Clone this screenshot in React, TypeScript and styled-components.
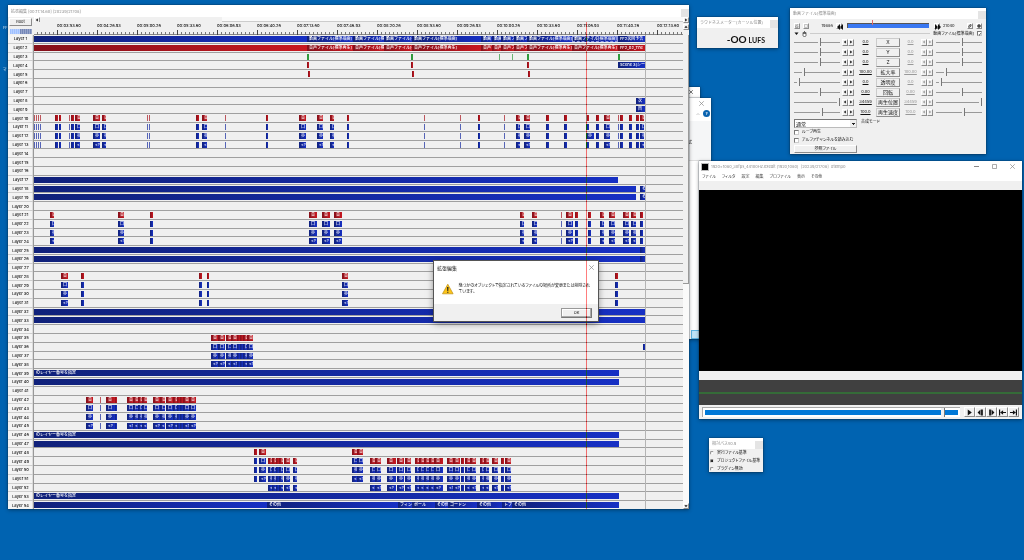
import React from "react";
import styled, { createGlobalStyle, css } from "styled-components";

const GlobalStyle = createGlobalStyle`
  * { box-sizing: border-box; }
  body {
    margin: 0;
    background: #0063b1;
    font-family: Inter, "Noto Sans CJK JP", sans-serif;
    font-size: 4px;
    line-height: 6px;
    color: #111;
    font-feature-settings: "palt";
  }
  button, input, select {
    margin: 0;
    padding: 0;
    font: inherit;
    color: inherit;
    font-feature-settings: inherit;
    border-radius: 0;
  }
`;

/* ---------- shared parts ---------- */

const raised = css`
  background: #f0f0f0;
  border: 1px solid;
  border-color: #fff #8c8c8c #8c8c8c #fff;
`;

const Desktop = styled.main`
  position: relative;
  min-height: 100vh;
  overflow: hidden;
  background: #0063b1;
`;

const DesktopLabel = styled.span`
  position: absolute;
  left: 3px;
  color: #cfe2f2;
`;

const Window = styled.section`
  position: absolute;
  display: flex;
  flex-direction: column;
  background: #f0f0f0;
  box-shadow: 0 0 1px #123, 0 1px 4px rgba(0, 0, 0, 0.4);
`;

const TitleBar = styled.header<{ $active?: boolean }>`
  display: flex;
  align-items: center;
  flex: none;
  height: ${(p) => (p.$active ? 13 : 11)}px;
  padding-left: 3px;
  background: #fff;
  color: ${(p) => (p.$active ? "#111" : "#8c8c8c")};
  white-space: nowrap;
`;

const TitleText = styled.h1`
  flex: 1;
  margin: 0;
  font-size: inherit;
  font-weight: 400;
  font-feature-settings: normal;
`;

const CloseStub = styled.button`
  width: 8px;
  height: 8px;
  margin-top: 2px;
  border: 0;
  background: #e4e4e4;
  color: #fff;
  line-height: 6px;
`;

const PlainIconButton = styled.button`
  display: grid;
  place-items: center;
  border: 0;
  background: none;
  color: #888;
`;

const Cross = ({ size = 5 }: { size?: number }) => (
  <svg width={size} height={size} viewBox="0 0 10 10" aria-hidden="true">
    <path d="M0.5 0.5L9.5 9.5M9.5 0.5L0.5 9.5" stroke="currentColor" strokeWidth="1.4" />
  </svg>
);

const Triangle = ({ dir, size = 4 }: { dir: "left" | "right" | "up" | "down"; size?: number }) => {
  const d = {
    left: "M7 1V9L2 5Z",
    right: "M3 1V9L8 5Z",
    up: "M1 7H9L5 2Z",
    down: "M1 3H9L5 8Z",
  }[dir];
  return (
    <svg width={size} height={size} viewBox="0 0 10 10" aria-hidden="true">
      <path d={d} fill="currentColor" />
    </svg>
  );
};

const SmallButton = styled.button`
  ${raised}
  display: grid;
  place-items: center;
  width: 6px;
  height: 6px;
`;

/* ---------- timeline ---------- */

type Colour = "blue" | "red" | "green";
type Clip = { at: number; len: number; colour: Colour; text?: string; marked?: boolean };

const VIEW_START = 34;
const LAYER_COUNT = 54;

const clip = (at: number, len: number, colour: Colour, text?: string): Clip => ({ at, len, colour, text });

const layers: Clip[][] = Array.from({ length: LAYER_COUNT + 1 }, () => []);

const mediaCuts = [307, 353, 384, 412, 481, 492, 501, 514, 527, 572];
const addMedia = (layer: number, colour: Colour, name: string, last: string) => {
  layers[layer].push(clip(34, 273, colour));
  mediaCuts.forEach((at, i) => {
    const end = mediaCuts[i + 1] ?? 618;
    layers[layer].push({ ...clip(at, end - at, colour, name), marked: i === 9 && layer === 1 });
  });
  layers[layer].push(clip(618, 27, colour, last));
};
addMedia(1, "blue", "動画ファイル[標準描画]", "FF2次回予告");
addMedia(2, "red", "音声ファイル[標準再生]", "FF2_02_The");

[[307, 2], [411, 2], [499, 1], [512, 1], [527, 2], [618, 2]].forEach(([a, l]) => layers[3].push(clip(a, l, "green")));
[307, 411, 527].forEach((a) => {
  layers[4].push(clip(a, 2, "red"));
  layers[5].push(clip(a + 1, 2, "red"));
});
layers[4].push(clip(618, 27, "blue", "Scene 3(シーン)"));
layers[8].push(clip(636, 9, "blue", "次"));
layers[9].push(clip(636, 9, "blue", "目"));

const voiceTexts = ["音", "口", "歩", "<?"];
const addVoices = (first: number, spans: number[][], colours: Colour[] = ["red", "blue", "blue", "blue"]) => {
  colours.forEach((colour, i) =>
    spans.forEach(([at, len]) =>
      layers[first + i].push(clip(at, len, colour, len >= 4 ? voiceTexts[i] : undefined)),
    ),
  );
};

addVoices(10, [
  [34, 1], [36, 1], [38, 1], [40, 1], [55, 3], [59, 2], [69, 1], [71, 3], [75, 5], [93, 7], [102, 4], [147, 1], [149, 1],
  [196, 3], [202, 5], [225, 1], [266, 2], [299, 7], [317, 6], [330, 4], [347, 2], [424, 1], [460, 1], [478, 2],
  [504, 1], [516, 4], [524, 6], [546, 3], [564, 3], [586, 3], [596, 3], [604, 6], [618, 1], [620, 3], [629, 3],
  [636, 3], [640, 4],
]);
layers[12].push(clip(586, 8, "blue", "歩"));
layers[17].push(clip(34, 584, "blue"));
[18, 19].forEach((n) => layers[n].push(clip(34, 602, "blue"), clip(640, 5, "blue", "そ")));
addVoices(21, [
  [50, 4], [118, 6], [150, 3], [309, 8], [322, 8], [334, 8], [520, 4], [532, 5], [561, 1], [566, 7], [575, 3],
  [588, 3], [600, 4], [609, 6], [623, 6], [631, 5], [640, 3],
]);
[25, 26].forEach((n) => layers[n].push(clip(34, 606, "blue"), clip(640, 5, "blue")));
addVoices(28, [[61, 7], [81, 3], [199, 3], [207, 2], [342, 6], [615, 3]]);
[32, 33].forEach((n) => layers[n].push(clip(34, 611, "blue")));
addVoices(35, [[211, 7], [218, 7], [226, 5], [231, 6], [237, 3], [240, 3], [243, 4], [247, 6]]);
layers[36].push(clip(643, 2, "blue"));
[39, 40, 46, 47, 53].forEach((n) => {
  layers[n].push(clip(34, 585, "blue", n === 40 || n === 47 ? undefined : "のレイヤー番号を指定"));
});
addVoices(42, [
  [86, 7], [100, 1], [106, 9], [115, 2], [127, 6], [133, 5], [138, 4], [142, 5], [153, 7], [160, 5], [166, 7],
  [173, 4], [177, 3], [180, 3], [183, 6], [189, 7],
]);
const lateVoices = [[254, 3], [259, 7], [352, 5], [357, 6]];
const lastVoices = [
  [268, 4], [272, 4], [276, 3], [279, 4], [284, 6], [293, 4], [370, 5], [375, 6], [387, 9], [397, 7], [405, 6],
  [415, 4], [419, 5], [424, 5], [429, 5], [434, 9], [447, 6], [453, 7], [461, 3], [465, 5], [470, 6], [480, 4],
  [484, 5], [492, 6], [501, 3], [505, 6],
];
addVoices(48, lateVoices);
addVoices(49, lastVoices);
[[34, 267, ""], [267, 398, "その他"], [398, 412, "フィン"], [412, 435, "ボール"], [435, 448, "その他"],
  [448, 477, "ゴードン"], [477, 502, "その他"], [502, 512, "トブー"], [512, 619, "その他"],
].forEach(([a, e, t]) => layers[54].push(clip(Number(a), Number(e) - Number(a), "blue", String(t))));

const times = [
  "00:03:53.60", "00:04:26.93", "00:05:00.26", "00:05:33.60", "00:06:06.93", "00:06:40.26", "00:07:13.60",
  "00:07:46.93", "00:08:20.26", "00:08:53.60", "00:09:26.93", "00:10:00.26", "00:10:33.60", "00:11:06.93",
  "00:11:40.26", "00:12:13.60",
];

const TimelineWindow = styled(Window)`
  left: 8px;
  top: 5px;
  width: calc(100% - 343px);
  min-width: 320px;
  padding-top: 1px;
  background: #fff;
`;

const TimelineBody = styled.div`
  display: grid;
  grid-template-columns: 26px minmax(0, 1fr) 6px;
  grid-template-rows: 18px 474px;
  background: #f0f0f0;
`;

const Corner = styled.div`
  display: flex;
  flex-direction: column;
  gap: 3px;
  padding: 1px 2px 0 1px;
`;

const RootButton = styled.button`
  ${raised}
  height: 8px;
  line-height: 6px;
`;

const ZoomGauge = styled.div`
  height: 5px;
  margin: 0 0 0 1px;
  background: repeating-linear-gradient(90deg, transparent 0 1px, rgba(255, 255, 255, 0.25) 1px 2px),
    linear-gradient(90deg, #9fc0ff 45%, #7487b8 45%);
`;

const RulerArea = styled.div`
  display: flex;
  flex-direction: column;
  overflow: hidden;
`;

const HScroll = styled.div`
  display: flex;
  height: 5px;
  background: #fafafa;
`;

const HScrollThumb = styled.div`
  width: 28%;
  background: #f0f0f0;
`;

const HScrollRest = styled.div`
  flex: 1;
  border-bottom: 1px solid #ccc;
`;

const Ruler = styled.div`
  display: flex;
  flex: 1;
  padding-left: 23px;
  line-height: 7px;
  background:
    repeating-linear-gradient(90deg, #444 0 1px, transparent 1px 40px) 23px 100% / 100% 5px no-repeat,
    repeating-linear-gradient(90deg, transparent 0 3px, #777 3px 4px) 0 100% / 100% 3px no-repeat,
    linear-gradient(#888, #888) 0 100% / 100% 1px no-repeat,
    #f0f0f0;
`;

const RulerLabel = styled.span`
  flex: none;
  width: 40px;
  font-weight: 500;
`;

const Layers = styled.div`
  position: relative;
  grid-column: 1 / 3;
  overflow: hidden;
`;

const LayerGrid = styled.div`
  display: grid;
  grid-template-rows: repeat(${LAYER_COUNT}, 1fr);
  height: 475px;
`;

const LayerRow = styled.div`
  display: grid;
  grid-template-columns: 26px minmax(0, 1fr);
  min-height: 0;
`;

const LayerButton = styled.button`
  border: 0;
  border-right: 1px solid #999;
  background: #f4f4f4;
  box-shadow: inset 0 -1px #cfcfcf, inset -1px 0 #ddd;
  font-weight: 500;
  line-height: 8px;
  min-height: 0;
`;

const Track = styled.div`
  position: relative;
  min-height: 0;
  overflow: hidden;
  border-bottom: 1px solid #a0a0a0;
`;

const clipFill = {
  blue: "linear-gradient(90deg, #10217a, #1730c4)",
  red: "linear-gradient(90deg, #84101a, #c81820)",
  green: "#2f9a3c",
};

const ClipBox = styled.div<{ $colour: Colour; $faint: boolean; $marked?: boolean }>`
  position: absolute;
  top: 1px;
  height: 6px;
  overflow: hidden;
  text-indent: 2px;
  background: ${(p) => clipFill[p.$colour]};
  opacity: ${(p) => (p.$faint ? 0.7 : 1)};
  outline: ${(p) => (p.$marked ? "1px dashed #8f9ae0" : "none")};
  outline-offset: -1px;
  color: #fff;
  font-feature-settings: normal;
  font-weight: 500;
  line-height: 6px;
  white-space: nowrap;
`;

const Playhead = styled.div`
  position: absolute;
  z-index: 1;
  top: 17px;
  bottom: 0;
  left: 578px;
  width: 1px;
  background: #008282;
  mix-blend-mode: difference;
`;

const EndLine = styled.div`
  position: absolute;
  top: 0;
  bottom: 0;
  left: 637px;
  width: 1px;
  background: #b4b4b4;
`;

const ScrollCorner = styled.div`
  display: flex;
  flex-direction: column;
  gap: 1px;
`;

const VScroll = styled.div`
  display: flex;
  flex-direction: column;
  background: #fafafa;
`;

const VScrollThumb = styled.div`
  height: 249px;
  background: #f0f0f0;
  border-right: 1px solid #999;
  border-bottom: 1px solid #999;
`;

const Spacer = styled.div`
  flex: 1;
`;

const Timeline = () => (
  <TimelineWindow aria-label="拡張編集">
    <TitleBar>
      <TitleText>拡張編集 [00:11:14.60] [20239/21708]</TitleText>
      <CloseStub aria-label="閉じる" />
    </TitleBar>
    <TimelineBody>
      <Corner>
        <RootButton>Root</RootButton>
        <ZoomGauge />
      </Corner>
      <RulerArea>
        <HScroll>
          <SmallButton aria-label="左へ"><Triangle dir="left" /></SmallButton>
          <HScrollThumb />
          <HScrollRest />
        </HScroll>
        <Ruler>
          {times.map((t) => <RulerLabel key={t}>{t}</RulerLabel>)}
        </Ruler>
      </RulerArea>
      <ScrollCorner>
        <SmallButton aria-label="右へ"><Triangle dir="right" /></SmallButton>
        <SmallButton aria-label="上へ"><Triangle dir="up" /></SmallButton>
      </ScrollCorner>
      <Layers>
        <LayerGrid>
          {layers.slice(1).map((clips, i) => (
            <LayerRow key={i}>
              <LayerButton>Layer {i + 1}</LayerButton>
              <Track>
                {clips.map((c, n) => (
                  <ClipBox
                    key={n}
                    $colour={c.colour}
                    $faint={c.len === 1}
                    $marked={c.marked}
                    style={{ left: c.at - VIEW_START, width: c.len }}
                  >
                    {c.text}
                  </ClipBox>
                ))}
              </Track>
            </LayerRow>
          ))}
        </LayerGrid>
        <EndLine />
      </Layers>
      <VScroll>
        <VScrollThumb />
        <Spacer />
        <SmallButton aria-label="下へ"><Triangle dir="down" /></SmallButton>
      </VScroll>
    </TimelineBody>
    <Playhead />
  </TimelineWindow>
);

/* ---------- windows behind ---------- */

const BackWindow = styled(Window)<{ $front?: boolean }>`
  top: ${(p) => (p.$front ? 98 : 87)}px;
  right: ${(p) => (p.$front ? 313 : 324)}px;
  width: 60px;
  height: ${(p) => (p.$front ? 241 : 200)}px;
  background: #fff;
`;

const BackTitle = styled.div`
  display: flex;
  justify-content: flex-end;
  padding: 3px 7px 0 0;
`;

const HelpRow = styled.div`
  display: flex;
  justify-content: flex-end;
  align-items: center;
  gap: 3px;
  height: 15px;
  padding-right: 1px;
  color: #999;
`;

const HelpBadge = styled.button`
  width: 7px;
  height: 7px;
  border: 0;
  border-radius: 50%;
  background: #0a63b0;
  color: #fff;
  font-weight: 700;
`;

const RibbonPane = styled.div`
  display: flex;
  justify-content: flex-end;
  align-items: center;
  height: 40px;
  padding: 4px 19px 0 0;
  background: #f5f6f7;
  border-bottom: 1px solid #ddd;
`;

const ViewSwitch = styled.div`
  align-self: flex-end;
  width: 20px;
  height: 9px;
  margin-top: auto;
  background: #bfe3f7;
  border: 1px solid #5cb4e4;
`;

/* ---------- loudness meter ---------- */

const LoudnessWindow = styled(Window)`
  top: 17px;
  right: 246px;
  width: 81px;
  height: 31px;
`;

const Reading = styled.output`
  display: flex;
  align-items: baseline;
  justify-content: flex-end;
  gap: 2px;
  padding: 4px 13px 0 0;
  font: 700 10px/14px Lato, sans-serif;
`;

const Unit = styled.span`
  font-size: 7px;
`;

/* ---------- property panel ---------- */

const PropertyWindow = styled(Window)`
  top: 8px;
  right: 38px;
  width: 196px;
  height: 146px;
`;

const PropertyBody = styled.div`
  display: flex;
  flex-direction: column;
  padding: 2px 4px 0;
`;

const RangeRow = styled.div`
  display: flex;
  align-items: center;
  gap: 3px;
  height: 9px;
`;

const RangeBar = styled.div`
  position: relative;
  flex: 0 0 82px;
  height: 5px;
  margin: 0 2px;
  background: #3a78f2;
  border: 1px solid #555;
  border-width: 1px 0 0 1px;
`;

const RangeCursor = styled.i`
  position: absolute;
  left: 30%;
  top: -4px;
  width: 1px;
  height: 5px;
  background: #e06a6a;
`;

const HeadingRow = styled.div`
  display: flex;
  align-items: center;
  gap: 3px;
  height: 7px;
`;

const Rule = styled.hr`
  flex: 1;
  margin: 0;
  border: 0;
  border-top: 1px solid #ccc;
`;

const Check = styled.input`
  appearance: none;
  flex: none;
  display: grid;
  place-items: center;
  width: 5px;
  height: 5px;
  background: #fff;
  border: 1px solid #888;
  border-color: #777 #ccc #ccc #777;
  &:checked::before { content: "✓"; font: 700 5px/4px "DejaVu Sans", sans-serif; color: #111; }
`;

const ParamRow = styled.div`
  display: grid;
  grid-template-columns: 46px 13px 17px 24px 17px 13px 46px;
  justify-content: space-between;
  align-items: center;
  height: 10px;
`;

const Slider = styled.input`
  appearance: none;
  width: 100%;
  height: 8px;
  background: linear-gradient(#999, #999) 0 50% / 100% 1px no-repeat;
  &::-webkit-slider-thumb {
    appearance: none;
    width: 3px;
    height: 8px;
    background: #f0f0f0;
    border: 0;
    border-right: 1px solid #777;
  }
`;

const Arrows = styled.div<{ $dim?: boolean }>`
  display: flex;
  color: ${(p) => (p.$dim ? "#999" : "#111")};
`;

const ArrowButton = styled(SmallButton)`
  height: 7px;
`;

const Value = styled.span<{ $dim?: boolean }>`
  color: ${(p) => (p.$dim ? "#999" : "#111")};
  text-align: center;
  text-decoration: underline;
  text-underline-offset: 1px;
`;

const ParamButton = styled.button`
  ${raised}
  height: 9px;
  font-size: 5px;
  line-height: 6px;
  border-color: #ccc #8c8c8c #8c8c8c #ccc;
`;

const BlendRow = styled.div`
  display: flex;
  gap: 4px;
  padding-top: 2px;
  height: 11px;
`;

const BlendSelect = styled.select`
  appearance: none;
  width: 63px;
  height: 9px;
  padding-left: 1px;
  font-size: 5px;
  background: linear-gradient(#222, #222) 57px 3px / 3px 1px no-repeat,
    linear-gradient(#222, #222) 58px 4px / 1px 1px no-repeat,
    linear-gradient(90deg, transparent 55px, #f0f0f0 55px), #fff;
  border: 1px solid;
  border-color: #777 #bbb #bbb #777;
`;

const OptionLabel = styled.label`
  display: flex;
  align-items: center;
  gap: 3px;
  height: 8px;
  white-space: nowrap;
`;

const FileButton = styled.button`
  ${raised}
  width: 63px;
  height: 8px;
  margin-top: 1px;
  line-height: 6px;
`;

const params = [
  { name: "X", value: "0.0", pos: 56 },
  { name: "Y", value: "0.0", pos: 56 },
  { name: "Z", value: "0.0", pos: 56 },
  { name: "拡大率", value: "100.00", pos: 18 },
  { name: "透明度", value: "0.0", pos: 6 },
  { name: "回転", value: "0.00", pos: 56 },
  { name: "再生位置", value: "34459", pos: 100 },
  { name: "再生速度", value: "100.0", pos: 60 },
];

const Skip = ({ back }: { back?: boolean }) => (
  <svg width="6" height="6" viewBox="0 0 10 10" aria-hidden="true">
    <path d={back ? "M5 0V10L0 5ZM10 0V10L5 5Z" : "M0 0V10L5 5ZM5 0V10L10 5Z"} fill="#111" />
  </svg>
);

const Properties = () => (
  <PropertyWindow aria-label="動画ファイル">
    <TitleBar>
      <TitleText>動画ファイル[標準描画]</TitleText>
      <CloseStub aria-label="閉じる" />
    </TitleBar>
    <PropertyBody>
      <RangeRow>
        <SmallButton aria-label="カメラ">
          <svg width="4" height="4" viewBox="0 0 8 8"><path d="M0 2H4L7 0M1 4H6V7H1Z" fill="none" stroke="#666" /></svg>
        </SmallButton>
        <SmallButton aria-label="枠">
          <svg width="4" height="4" viewBox="0 0 8 8"><path d="M1 1H7V7H1Z" fill="none" stroke="#999" /></svg>
        </SmallButton>
        <Spacer />
        <span>19886</span>
        <SmallButton aria-label="前へ"><Skip back /></SmallButton>
        <RangeBar><RangeCursor /></RangeBar>
        <SmallButton aria-label="次へ"><Skip /></SmallButton>
        <span>21040</span>
        <Spacer />
        <SmallButton aria-label="曲線">
          <svg width="4" height="4" viewBox="0 0 8 8"><path d="M1 7L2 3L6 1L6 4L2 7" fill="none" stroke="#222" strokeWidth="1.5" /></svg>
        </SmallButton>
        <SmallButton aria-label="追加">
          <svg width="4" height="4" viewBox="0 0 8 8"><path d="M4 0V8M0 4H8" stroke="#111" strokeWidth="2" /></svg>
        </SmallButton>
      </RangeRow>
      <HeadingRow>
        <Triangle dir="down" size={5} />
        <svg width="5" height="6" viewBox="0 0 10 12" aria-hidden="true">
          <path d="M2 3H8V9Q8 11 5 11T2 9ZM2 5H8M5 0V3" fill="#fff" stroke="#333" strokeWidth="1.4" />
        </svg>
        <Rule />
        <label htmlFor="enable-media">動画ファイル[標準描画]</label>
        <Check id="enable-media" type="checkbox" defaultChecked />
      </HeadingRow>
      {params.map((p) => (
        <ParamRow key={p.name}>
          <Slider type="range" aria-label={`${p.name} 始点`} defaultValue={p.pos} />
          <Arrows>
            <ArrowButton aria-label="減らす"><Triangle dir="left" /></ArrowButton>
            <ArrowButton aria-label="増やす"><Triangle dir="right" /></ArrowButton>
          </Arrows>
          <Value>{p.value}</Value>
          <ParamButton>{p.name}</ParamButton>
          <Value $dim>{p.value}</Value>
          <Arrows $dim>
            <ArrowButton aria-label="減らす"><Triangle dir="left" /></ArrowButton>
            <ArrowButton aria-label="増やす"><Triangle dir="right" /></ArrowButton>
          </Arrows>
          <Slider type="range" aria-label={`${p.name} 終点`} defaultValue={p.pos} />
        </ParamRow>
      ))}
      <BlendRow>
        <BlendSelect id="blend" defaultValue="通常"><option>通常</option></BlendSelect>
        <label htmlFor="blend">合成モード</label>
      </BlendRow>
      <OptionLabel><Check type="checkbox" />ループ再生</OptionLabel>
      <OptionLabel><Check type="checkbox" />アルファチャンネルを読み込む</OptionLabel>
      <FileButton>参照ファイル</FileButton>
    </PropertyBody>
  </PropertyWindow>
);

/* ---------- preview ---------- */

const PreviewWindow = styled(Window)`
  top: 161px;
  right: 2px;
  width: 323px;
`;

const AppIcon = styled.i`
  width: 6px;
  height: 6px;
  margin-right: 3px;
  background: #000;
  outline: 1px solid #bbb;
`;

const WindowControls = styled.div`
  display: flex;
  gap: 13px;
  padding-right: 7px;
`;

const DialogControls = styled(WindowControls)`
  padding-right: 4px;
`;

const MenuBar = styled.nav`
  display: flex;
  gap: 6px;
  padding: 0 3px;
  height: 9px;
  line-height: 10px;
  background: #fff;
`;

const MenuItem = styled.button`
  border: 0;
  background: none;
  color: #444;
`;

const Gap = styled.div`
  height: 9px;
`;

const Screen = styled.div`
  height: 181px;
  background: #000;
`;

const Waveform = styled.div`
  height: 25px;
  background: linear-gradient(#356b38, #356b38) 0 12px / 100% 2px no-repeat, #404040;
`;

const Transport = styled.div`
  display: flex;
  align-items: center;
  gap: 4px;
  height: 14px;
  padding: 0 3px;
`;

const SeekBar = styled(Slider)`
  flex: 1;
  width: auto;
  min-width: 0;
  height: 10px;
  background: linear-gradient(#0078d7, #0078d7) 2px 2px / calc(100% - 4px) 5px no-repeat, #fff;
  border: 1px solid #aaa;
  border-width: 1px 0 0 1px;
  &::-webkit-slider-thumb { width: 4px; height: 9px; }
`;

const TransportButtons = styled.div`
  display: flex;
`;

const TransportButton = styled.button`
  ${raised}
  display: grid;
  place-items: center;
  width: 11px;
  height: 10px;
`;

const transport = [
  { name: "再生", d: "M3 1L10 6L3 11Z" },
  { name: "前フレーム", d: "M6 1V11L1 6ZM7 1H10V11H7Z" },
  { name: "次フレーム", d: "M2 1H5V11H2ZM6 1L11 6L6 11Z" },
  { name: "先頭", d: "M0 1H2V11H0ZM2 6L7 2V5H12V7H7V10Z" },
  { name: "末尾", d: "M10 1H12V11H10ZM10 6L5 2V5H0V7H5V10Z" },
];

const Preview = () => (
  <PreviewWindow aria-label="プレビュー">
    <TitleBar>
      <AppIcon />
      <TitleText>1920x1080_30fps_44100Hz.exedit (1920,1080)&nbsp; [20239/21708]&nbsp; #temp0</TitleText>
      <WindowControls>
        <PlainIconButton aria-label="最小化">
          <svg width="5" height="5" viewBox="0 0 5 5"><path d="M0 2.5H5" stroke="currentColor" /></svg>
        </PlainIconButton>
        <PlainIconButton aria-label="最大化">
          <svg width="5" height="5" viewBox="0 0 10 10"><path d="M1 1H9V9H1Z" fill="none" stroke="currentColor" strokeWidth="1.4" /></svg>
        </PlainIconButton>
        <PlainIconButton aria-label="閉じる"><Cross /></PlainIconButton>
      </WindowControls>
    </TitleBar>
    <MenuBar>
      {["ファイル", "フィルタ", "設定", "編集", "プロファイル", "表示", "その他"].map((m) => (
        <MenuItem key={m}>{m}</MenuItem>
      ))}
    </MenuBar>
    <Gap />
    <Screen />
    <Gap />
    <Waveform />
    <Transport>
      <SeekBar type="range" aria-label="再生位置" max={1000} defaultValue={940} />
      <TransportButtons>
        {transport.map((b) => (
          <TransportButton key={b.name} aria-label={b.name}>
            <svg width="7" height="7" viewBox="0 0 12 12"><path d={b.d} fill="#111" /></svg>
          </TransportButton>
        ))}
      </TransportButtons>
    </Transport>
  </PreviewWindow>
);

/* ---------- relative path ---------- */

const PathWindow = styled(Window)`
  top: 438px;
  right: 261px;
  width: 54px;
  height: 34px;
`;

const PathOptions = styled.fieldset`
  margin: 0;
  padding: 0 1px;
  border: 0;
`;

const Radio = styled.input`
  appearance: none;
  flex: none;
  width: 4px;
  height: 4px;
  background: #fff;
  border: 1px solid;
  border-color: #888 #eee #eee #888;
  border-radius: 50%;
  &:checked { background: #222; }
`;

/* ---------- message dialog ---------- */

const DialogWindow = styled(Window)`
  left: 434px;
  top: 261px;
  width: 164px;
  height: 60px;
  background: #fff;
  box-shadow: 0 0 0 1px #555, 0 2px 7px rgba(0, 0, 0, 0.5);
`;

const DialogTitle = styled(TitleText)`
  font-size: 5px;
`;

const DialogMessage = styled.div`
  display: flex;
  flex: 1;
  gap: 5px;
  padding: 9px 8px 0;
`;

const MessageText = styled.p`
  margin: 0;
  line-height: 6px;
  white-space: nowrap;
`;

const DialogFooter = styled.footer`
  display: flex;
  justify-content: flex-end;
  align-items: center;
  height: 17px;
  padding-right: 6px;
  background: #f0f0f0;
`;

const OkButton = styled.button`
  ${raised}
  width: 31px;
  height: 10px;
  border-color: #999 #777 #777 #999;
  box-shadow: inset -1px -1px #aaa, inset 1px 1px #fff;
`;

const Dialog = () => (
  <DialogWindow role="dialog" aria-label="拡張編集">
    <TitleBar $active>
      <DialogTitle>拡張編集</DialogTitle>
      <DialogControls>
        <PlainIconButton aria-label="閉じる"><Cross /></PlainIconButton>
      </DialogControls>
    </TitleBar>
    <DialogMessage>
      <svg width="12" height="12" viewBox="0 0 24 24" aria-hidden="true">
        <path d="M12 2L23 22H1Z" fill="#fcc419" stroke="#b98a10" strokeWidth="1.4" strokeLinejoin="round" />
        <path d="M10.5 8H13.5L13 16H11ZM10.7 17.5H13.3V20H10.7Z" fill="#222" />
      </svg>
      <MessageText>
        幾つかのオブジェクトで指定されているファイルの場所が変更または削除され
        <br />
        ています。
      </MessageText>
    </DialogMessage>
    <DialogFooter><OkButton>OK</OkButton></DialogFooter>
  </DialogWindow>
);

export default function App() {
  return (
    <Desktop>
      <GlobalStyle />
      <DesktopLabel style={{ top: 25 }}>FF</DesktopLabel>
      <DesktopLabel style={{ top: 67 }}>マ</DesktopLabel>
      <BackWindow aria-hidden="true"><BackTitle><Cross size={4} /></BackTitle></BackWindow>
      <BackWindow $front>
        <BackTitle><PlainIconButton aria-label="閉じる"><Cross /></PlainIconButton></BackTitle>
        <HelpRow>
          <svg width="4" height="4" viewBox="0 0 8 8" aria-hidden="true"><path d="M1 6L4 3L7 6" fill="none" stroke="currentColor" /></svg>
          <HelpBadge>?</HelpBadge>
        </HelpRow>
        <RibbonPane>式</RibbonPane>
        <ViewSwitch />
      </BackWindow>
      <Timeline />
      <LoudnessWindow aria-label="ラウドネスメーター">
        <TitleBar>
          <TitleText>ラウドネスメーター(カーソル位置)</TitleText>
          <CloseStub aria-label="閉じる" />
        </TitleBar>
        <Reading>-OO <Unit>LUFS</Unit></Reading>
      </LoudnessWindow>
      <Properties />
      <Preview />
      <PathWindow aria-label="相対パス">
        <TitleBar>
          <TitleText>相対パスv0.9</TitleText>
          <CloseStub aria-label="閉じる" />
        </TitleBar>
        <PathOptions>
          <OptionLabel><Radio type="radio" name="base" />実行ファイル基準</OptionLabel>
          <OptionLabel><Radio type="radio" name="base" defaultChecked />プロジェクトファイル基準</OptionLabel>
          <OptionLabel><Radio type="radio" name="base" />プラグイン無効</OptionLabel>
        </PathOptions>
      </PathWindow>
      <Dialog />
    </Desktop>
  );
}
